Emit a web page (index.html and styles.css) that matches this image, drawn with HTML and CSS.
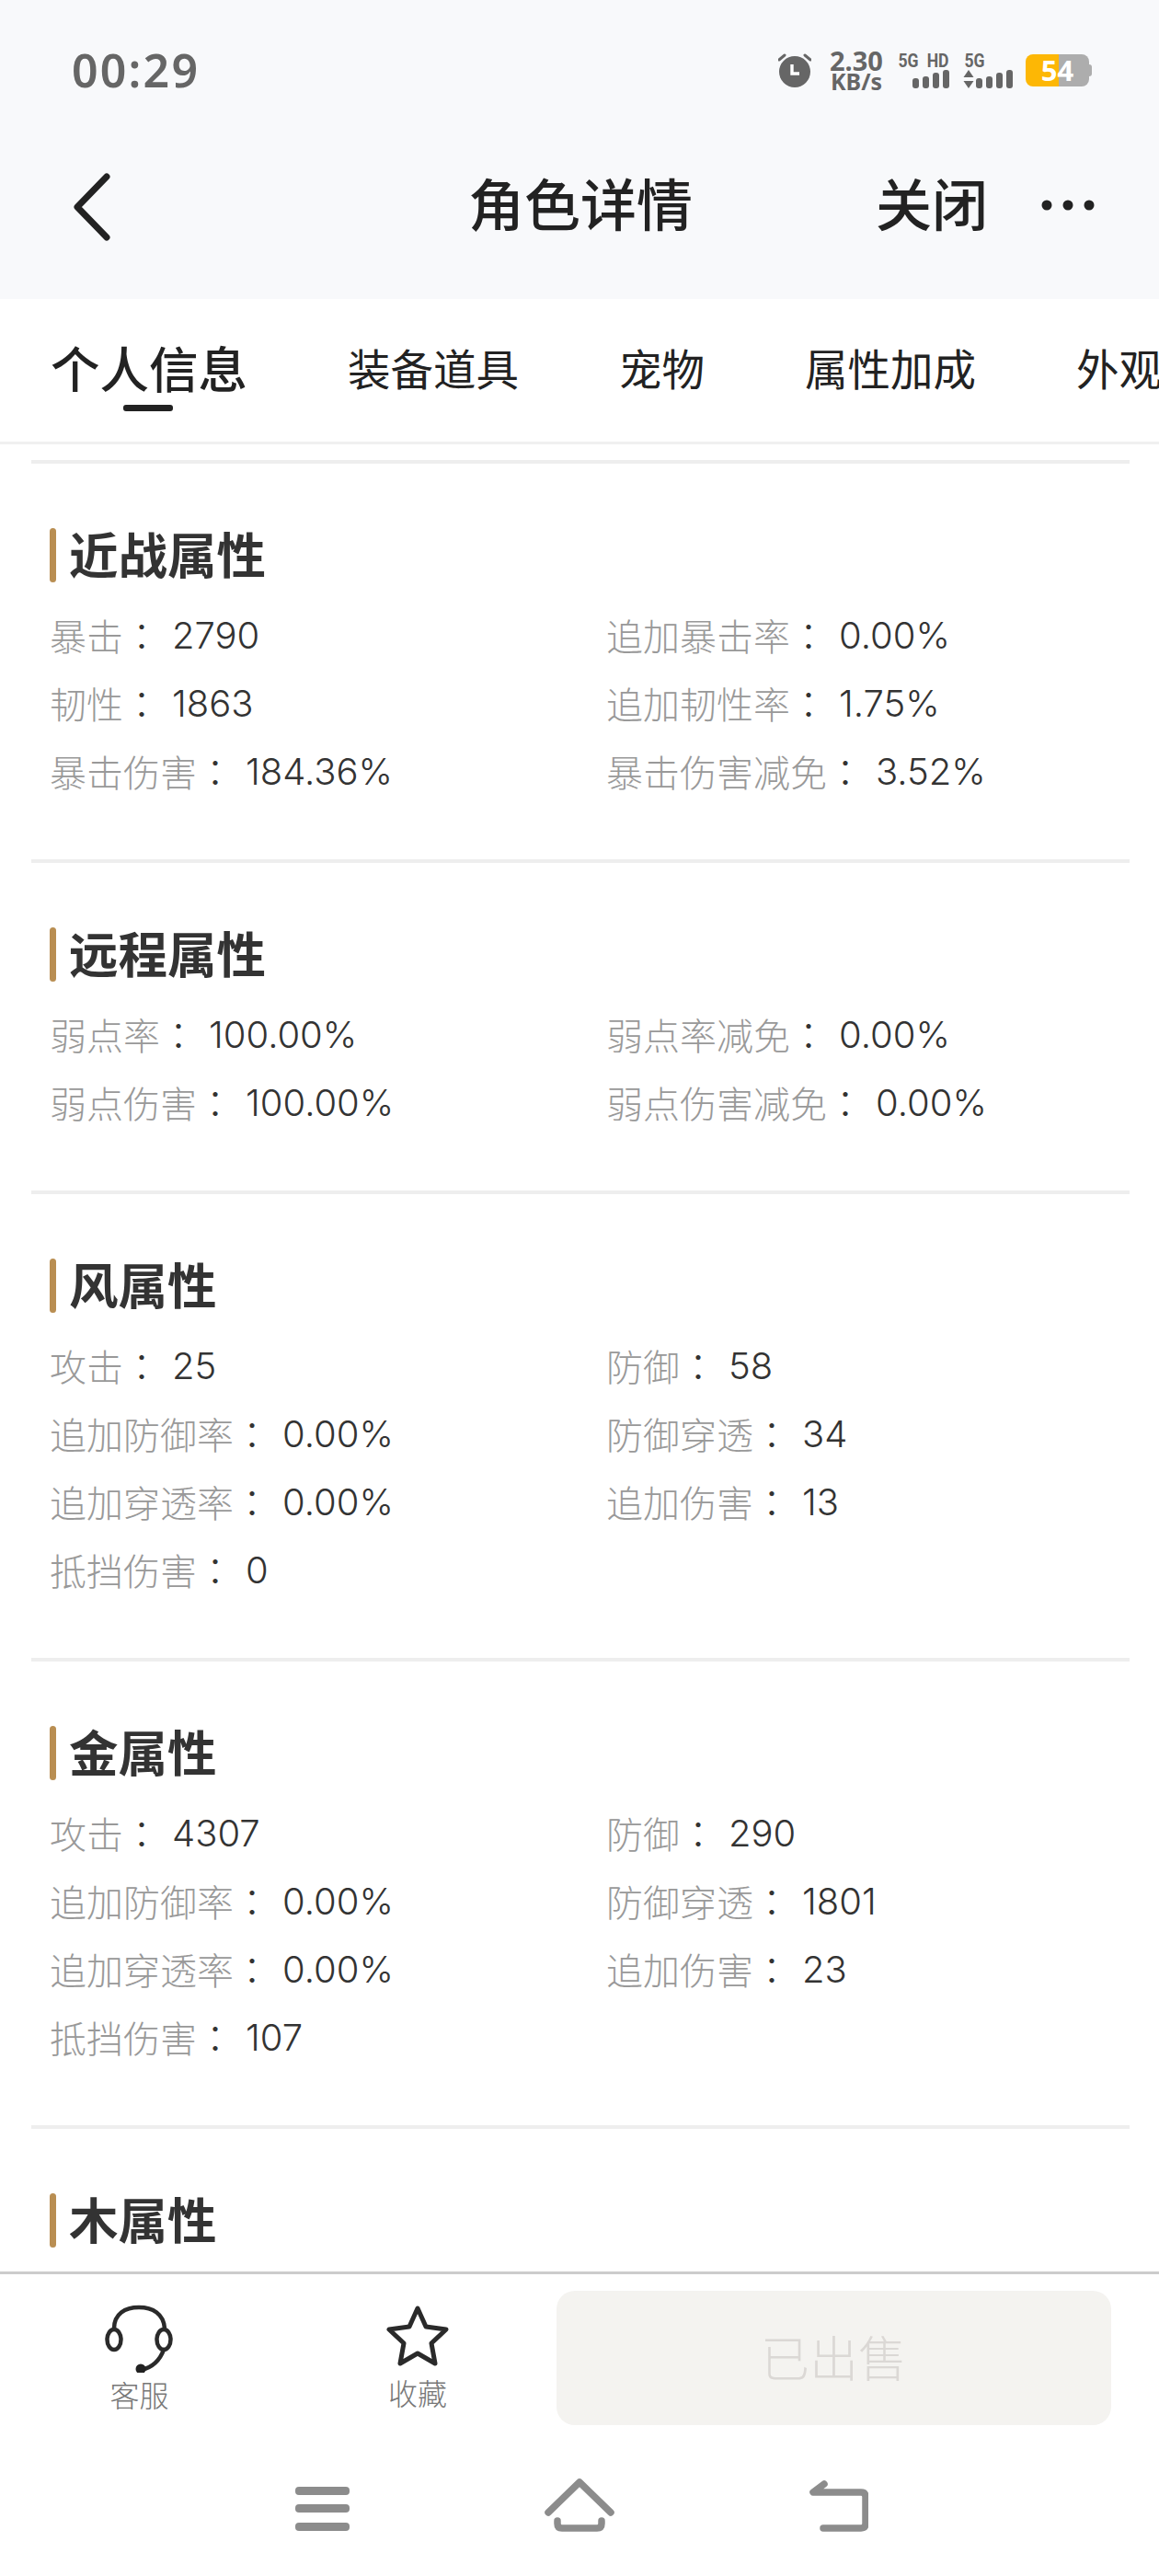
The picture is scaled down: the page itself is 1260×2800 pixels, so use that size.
FILE: index.html
```html
<!DOCTYPE html>
<html lang="zh-CN">
<head>
<meta charset="utf-8">
<title>角色详情</title>
<link rel="stylesheet" href="styles.css">
</head>
<body>
<div class="app">
  <header class="top">
    <div class="status">
      <span class="time">00:29</span>
      <div class="sys">
        <svg class="alarm" viewBox="0 0 36 38" width="36" height="38"><circle cx="18" cy="21" r="17" fill="#666"/><path d="M1 8 7 3M35 8 29 3" stroke="#666" stroke-width="3" stroke-linecap="round"/><path d="M15 13v10h8" fill="none" stroke="#fff" stroke-width="3.4"/></svg>
        <div class="speed"><span>2.30</span><span class="unit">KB/s</span></div>
        <div class="net one">
          <div class="netlabels"><span>5G</span><span>HD</span></div>
          <svg viewBox="0 0 41 20" width="41" height="20"><g fill="#666"><rect x="0" y="9" width="7" height="11" rx="3"/><rect x="11" y="7" width="7" height="13" rx="3"/><rect x="22" y="3" width="7" height="17" rx="3"/><rect x="33" y="0" width="7" height="20" rx="3"/></g></svg>
        </div>
        <div class="net two">
          <div class="netlabels"><span>5G</span></div>
          <svg viewBox="0 0 55 20" width="55" height="20"><g fill="#666"><path d="M6 0l5.500 8H.5zM6 20l5.500-8H.5z"/><rect x="14" y="9" width="7" height="11" rx="3"/><rect x="25" y="7" width="7" height="13" rx="3"/><rect x="36" y="3" width="7" height="17" rx="3"/><rect x="47" y="0" width="7" height="20" rx="3"/></g></svg>
        </div>
        <div class="battery"><span class="lvl">54</span><i class="nub"></i></div>
      </div>
    </div>
    <nav class="bar">
      <svg class="back" viewBox="0 0 44 74" width="44" height="74"><path d="M38 4 6 37l32 33" fill="none" stroke="#222" stroke-width="7" stroke-linecap="round" stroke-linejoin="round"/></svg>
      <h1 class="title">角色详情</h1>
      <span class="close">关闭</span>
      <svg class="more" viewBox="0 0 58 12" width="58" height="12"><circle cx="6" cy="6" r="5.500" fill="#222"/><circle cx="29" cy="6" r="5.500" fill="#222"/><circle cx="52" cy="6" r="5.500" fill="#222"/></svg>
    </nav>
  </header>

  <div class="tabs">
    <span class="tab active">个人信息</span>
    <span class="tab">装备道具</span>
    <span class="tab">宠物</span>
    <span class="tab">属性加成</span>
    <span class="tab">外观</span>
  </div>

  <main class="content">
    <section class="sec">
      <h2 class="sec-title">近战属性</h2>
      <div class="grid">
        <div class="row"><span class="k">暴击</span><span class="c">：</span><span class="v">2790</span></div>
        <div class="row"><span class="k">追加暴击率</span><span class="c">：</span><span class="v">0.00%</span></div>
        <div class="row"><span class="k">韧性</span><span class="c">：</span><span class="v">1863</span></div>
        <div class="row"><span class="k">追加韧性率</span><span class="c">：</span><span class="v">1.75%</span></div>
        <div class="row"><span class="k">暴击伤害</span><span class="c">：</span><span class="v">184.36%</span></div>
        <div class="row"><span class="k">暴击伤害减免</span><span class="c">：</span><span class="v">3.52%</span></div>
      </div>
    </section>
    <section class="sec">
      <h2 class="sec-title">远程属性</h2>
      <div class="grid">
        <div class="row"><span class="k">弱点率</span><span class="c">：</span><span class="v">100.00%</span></div>
        <div class="row"><span class="k">弱点率减免</span><span class="c">：</span><span class="v">0.00%</span></div>
        <div class="row"><span class="k">弱点伤害</span><span class="c">：</span><span class="v">100.00%</span></div>
        <div class="row"><span class="k">弱点伤害减免</span><span class="c">：</span><span class="v">0.00%</span></div>
      </div>
    </section>
    <section class="sec">
      <h2 class="sec-title">风属性</h2>
      <div class="grid">
        <div class="row"><span class="k">攻击</span><span class="c">：</span><span class="v">25</span></div>
        <div class="row"><span class="k">防御</span><span class="c">：</span><span class="v">58</span></div>
        <div class="row"><span class="k">追加防御率</span><span class="c">：</span><span class="v">0.00%</span></div>
        <div class="row"><span class="k">防御穿透</span><span class="c">：</span><span class="v">34</span></div>
        <div class="row"><span class="k">追加穿透率</span><span class="c">：</span><span class="v">0.00%</span></div>
        <div class="row"><span class="k">追加伤害</span><span class="c">：</span><span class="v">13</span></div>
        <div class="row"><span class="k">抵挡伤害</span><span class="c">：</span><span class="v">0</span></div>
      </div>
    </section>
    <section class="sec">
      <h2 class="sec-title">金属性</h2>
      <div class="grid">
        <div class="row"><span class="k">攻击</span><span class="c">：</span><span class="v">4307</span></div>
        <div class="row"><span class="k">防御</span><span class="c">：</span><span class="v">290</span></div>
        <div class="row"><span class="k">追加防御率</span><span class="c">：</span><span class="v">0.00%</span></div>
        <div class="row"><span class="k">防御穿透</span><span class="c">：</span><span class="v">1801</span></div>
        <div class="row"><span class="k">追加穿透率</span><span class="c">：</span><span class="v">0.00%</span></div>
        <div class="row"><span class="k">追加伤害</span><span class="c">：</span><span class="v">23</span></div>
        <div class="row"><span class="k">抵挡伤害</span><span class="c">：</span><span class="v">107</span></div>
      </div>
    </section>
    <section class="sec">
      <h2 class="sec-title">木属性</h2>
    </section>
  </main>

  <footer class="foot">
    <div class="actions">
      <div class="act service">
        <svg viewBox="0 0 76 74" width="76" height="74"><g fill="none" stroke="#2a2a2a" stroke-width="4.500"><path d="M10 26C10 10 22 3 37 3s27 7 28 23"/><ellipse cx="10" cy="38" rx="7.500" ry="11"/><ellipse cx="64" cy="38" rx="7.500" ry="11"/><path d="M64 49C60 60 52 68 40 71" stroke-linecap="round"/></g><circle cx="39" cy="70" r="5.500" fill="#222"/></svg>
        <span class="act-label">客服</span>
      </div>
      <div class="act fav">
        <svg viewBox="0 0 70 68" width="70" height="68"><path d="M35 4 44 24 66 27 50 42 54 64 35 53 16 64 20 42 4 27 26 24Z" fill="none" stroke="#2a2a2a" stroke-width="5" stroke-linejoin="round"/></svg>
        <span class="act-label">收藏</span>
      </div>
      <button class="sold" type="button">已出售</button>
    </div>
    <div class="sysnav">
      <svg class="ico-menu" viewBox="0 0 60 48" width="60" height="48"><g fill="#8c8c8c"><rect y="0" width="59" height="9" rx="4"/><rect y="19" width="59" height="9" rx="4"/><rect y="39" width="59" height="9" rx="4"/></g></svg>
      <svg class="ico-home" viewBox="0 0 76 58" width="76" height="58"><g fill="none" stroke="#8c8c8c" stroke-width="7.500" stroke-linecap="round" stroke-linejoin="round"><path d="M4 37 38 4l34 33"/><path d="M14 46v3q0 5 5 5h38q5 0 5-5v-3"/></g></svg>
      <svg class="ico-back" viewBox="0 0 64 56" width="64" height="56"><g fill="none" stroke="#8c8c8c" stroke-width="7.500" stroke-linecap="round" stroke-linejoin="round"><path d="M16 4 4 13h52q5 0 5 5v29q0 5-5 5H15"/></g></svg>
    </div>
  </footer>
</div>
</body>
</html>
```
FILE: styles.css
```css
* { box-sizing: border-box; }
html, body { margin: 0; padding: 0; background: #fff; }
body { font-family: "Noto Sans CJK SC", "Noto Sans", sans-serif; color: #333; }

.app { width: 1260px; height: 2800px; display: flex; flex-direction: column; overflow: hidden; }

.top { height: 325px; background: #f8f9fb; flex: none; }
.status { height: 152px; padding: 0 76px 0 78px; display: flex; align-items: center; justify-content: space-between; }
.time { font-family: "Noto Sans", sans-serif; font-weight: 600; font-size: 50px; letter-spacing: 2.2px; color: #666; line-height: 1; }
.sys { display: flex; align-items: center; color: #666; width: 338px; }
.alarm { flex: none; margin-right: 18px; }
.speed { display: flex; flex-direction: column; align-items: center; width: 62px; font-family: "Noto Sans", sans-serif; font-weight: 700; font-size: 29px; line-height: 24px; flex: none; }
.speed .unit { font-size: 25px; line-height: 20px; }
.net { display: flex; flex-direction: column; align-items: flex-end; flex: none; font-family: "Roboto", sans-serif; font-weight: 700; font-size: 20px; line-height: 20px; }
.net.one { width: 55px; margin: 0 0 0 16px; }
.net.two { width: 55px; margin: 0 0 0 14px; align-items: flex-start; }
.netlabels { display: flex; gap: 6px; }
.netlabels span { transform: scaleX(.88); }
.battery { position: relative; margin-left: 13px; width: 69px; height: 35px; border-radius: 8px; flex: none; background: linear-gradient(90deg, #fdb705 0 36px, #adadad 36px); display: flex; align-items: center; justify-content: center; }
.lvl { font-family: "Noto Sans", sans-serif; font-weight: 700; font-size: 31px; line-height: 35px; color: #fff; }
.nub { position: absolute; right: -3px; top: 11px; width: 4px; height: 13px; border-radius: 0 3px 3px 0; background: #adadad; }

.bar { height: 146px; display: flex; align-items: center; position: relative; }
.back { position: absolute; left: 78px; top: 36px; }
.title { position: absolute; left: 509px; top: 0; margin: 0; line-height: 136px; font-size: 61px; font-weight: 500; color: #222; white-space: nowrap; }
.close { position: absolute; left: 952px; top: 0; line-height: 136px; font-size: 61px; font-weight: 500; color: #222; }
.more { position: absolute; left: 1132px; top: 65px; }

.tabs { height: 158px; flex: none; display: flex; align-items: center; gap: 109px; padding: 0 0 8px 55px; border-bottom: 3px solid #f0f0f0; white-space: nowrap; overflow: hidden; }
.tab { font-size: 46.5px; color: #222; line-height: 60px; flex: none; position: relative; }
.tab.active { font-size: 53.5px; font-weight: 500; }
.tab.active::after { content: ""; position: absolute; left: 79px; top: 71px; width: 54px; height: 7px; border-radius: 3px; background: #222; }

.content { flex: 1; min-height: 0; overflow: hidden; padding: 17px 32px 0 34px; }
.sec { border-top: 4px solid #eee; padding: 70px 0 59px 20px; }
.sec-title { margin: 0 0 20px; height: 59px; line-height: 54px; font-size: 53.5px; font-weight: 700; color: #333; padding-left: 21px; position: relative; }
.sec-title::before { content: ""; position: absolute; left: 0; top: 0; width: 7px; height: 59px; border-radius: 4px; background: #b98e52; }
.grid { display: grid; grid-template-columns: 605px 1fr; grid-auto-rows: 74px; }
.row { display: flex; align-items: center; font-size: 40px; white-space: nowrap; }
.k { color: #999; font-weight: 300; }
.c { color: #333; width: 53px; font-family: "Noto Sans CJK TC", sans-serif; font-weight: 300; }
.v { color: #333; font-family: "Inter", sans-serif; font-weight: 300; font-size: 40px; }

.foot { height: 331px; flex: none; border-top: 3px solid #ccc; background: #fff; }
.actions { height: 188px; position: relative; display: flex; padding: 18px 52px 0 0; }
.act { display: flex; flex-direction: column; align-items: center; flex: none; }
.act-label { font-size: 32px; line-height: 38px; color: #777; font-weight: 300; }
.service { width: 303px; padding-top: 15px; }
.service svg { margin-bottom: 4px; }
.fav { width: 302px; padding-top: 15px; }
.fav svg { margin-bottom: 8px; }
.sold { flex: 1; height: 146px; border: 0; border-radius: 20px; background: #f4f3f0; color: #dbd8d5; font-family: inherit; font-size: 53px; font-weight: 300; padding: 0 0 5px; }

.sysnav { height: 140px; position: relative; }
.ico-menu { position: absolute; left: 321px; top: 43px; }
.ico-home { position: absolute; left: 592px; top: 34px; }
.ico-back { position: absolute; left: 880px; top: 36px; }
```
